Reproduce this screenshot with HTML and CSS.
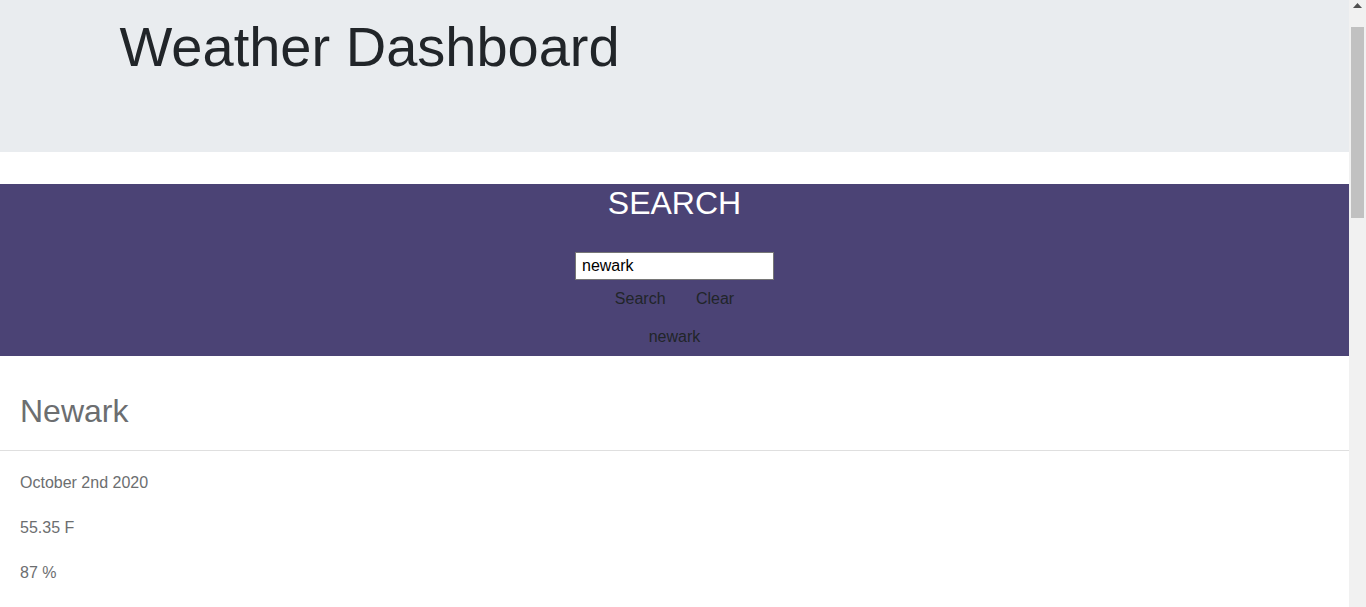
FILE: index.html
```html
<!DOCTYPE html>
<html lang="en">
<head>
<meta charset="utf-8">
<title>Weather Dashboard</title>
<link rel="stylesheet" href="styles.css">
</head>
<body>
<div class="page">
  <header class="jumbotron">
    <div class="container">
      <h1 class="display">Weather Dashboard</h1>
    </div>
  </header>

  <section class="search">
    <h2 class="search-title">SEARCH</h2>
    <form class="search-form">
      <input class="search-input" type="text" value="newark">
      <div class="btn-row">
        <button type="button" class="btn">Search</button>
        <button type="button" class="btn">Clear</button>
      </div>
      <div class="btn-row">
        <button type="button" class="btn">newark</button>
      </div>
    </form>
  </section>

  <section class="card">
    <div class="card-header">
      <h2 class="city">Newark</h2>
    </div>
    <div class="card-body">
      <p class="card-text">October 2nd 2020</p>
      <p class="card-text">55.35 F</p>
      <p class="card-text">87 %</p>
    </div>
  </section>
</div>

<div class="scrollbar" aria-hidden="true">
  <div class="scroll-btn">
    <svg width="9" height="5" viewBox="0 0 9 5"><path d="M0 5 L4.5 0 L9 5z" fill="#505050"/></svg>
  </div>
  <div class="scroll-thumb"></div>
</div>
</body>
</html>
```

FILE: styles.css
```css
* {
  box-sizing: border-box;
}

html, body {
  margin: 0;
  padding: 0;
}

body {
  font-family: "Liberation Sans", Arial, sans-serif;
  font-size: 16px;
  line-height: 1.5;
  color: #212529;
  background: #ffffff;
}

.page {
  width: calc(100% - 17px);
  min-height: 1782px;
}

/* classic browser scrollbar, drawn over the right edge */
.scrollbar {
  position: fixed;
  top: 0;
  right: 0;
  width: 17px;
  height: 100%;
  background: #f1f1f1;
  display: flex;
  flex-direction: column;
  align-items: center;
}

.scroll-btn {
  width: 17px;
  height: 17px;
  display: flex;
  justify-content: center;
  padding-top: 3px;
}

.scroll-btn svg {
  display: block;
}

.scroll-thumb {
  margin-top: 10px;
  width: 13px;
  height: 191px;
  background: #c1c1c1;
}

.jumbotron {
  background: #e9ecef;
  height: 152px;
  padding-top: 13px;
  margin-bottom: 32px;
}

.container {
  max-width: 1140px;
  margin: 0 auto;
  padding: 0 15px;
}

.display {
  margin: 0;
  font-size: 56px;
  font-weight: 300;
  line-height: 1.2;
  color: #212529;
}

.search {
  background: #4b4375;
  text-align: center;
  height: 172px;
}

.search-title {
  margin: 0;
  font-size: 32px;
  font-weight: 500;
  line-height: 1.2;
  color: #ffffff;
}

.search-form {
  margin: 0;
  padding-top: 29.6px;
  display: flex;
  flex-direction: column;
  align-items: center;
}

.search-input {
  display: block;
  width: 199px;
  height: 28px;
  margin: 0;
  padding: 0 6px;
  border: 1px solid #767676;
  border-radius: 0;
  font-family: "Liberation Sans", Arial, sans-serif;
  font-size: 16px;
  color: #000000;
  background: #ffffff;
}

.btn-row {
  display: flex;
  justify-content: center;
  gap: 4.4px;
}

.btn {
  display: inline-block;
  margin: 0;
  padding: 6px 12px;
  border: 1px solid transparent;
  background: transparent;
  font-family: "Liberation Sans", Arial, sans-serif;
  font-size: 16px;
  line-height: 1.5;
  color: #212529;
  cursor: pointer;
}

.card {
  margin-top: 24px;
}

.card-header {
  padding: 12px 20px;
  border-bottom: 1px solid #dfdfdf;
}

.city {
  margin: 0 0 8px;
  font-size: 32px;
  font-weight: 500;
  line-height: 1.2;
  color: #6c6e70;
}

.card-body {
  padding: 20px 20px;
}

.card-text {
  margin: 0 0 21px;
  font-size: 16px;
  line-height: 24px;
  color: #6c6e70;
}
```
